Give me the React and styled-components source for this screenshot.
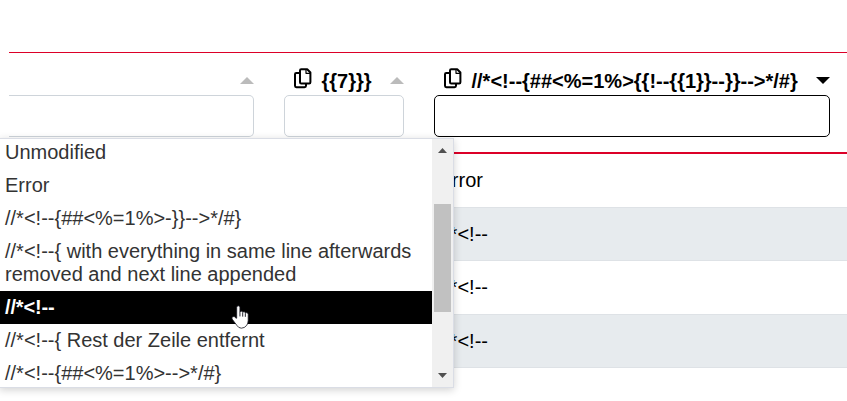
import React from "react";
import styled, { createGlobalStyle } from "styled-components";

const GlobalStyle = createGlobalStyle`
  * { box-sizing: border-box; }
  body {
    margin: 0;
    background: #fff;
    font: 20px/23px "Liberation Sans", Arial, sans-serif;
    color: #000;
    overflow: hidden;
  }
`;

const Page = styled.main`
  position: relative;
  width: 847px;
  height: 401px;
  padding: 52px 0 0 9px;
  overflow: hidden;
`;

const HeaderRow = styled.div`
  display: grid;
  grid-template-columns: 260px 150px 428px;
  height: 102px;
  border-top: 1px solid #dc0028;
  border-bottom: 2px solid #dc0028;
`;

const HeaderCell = styled.div`
  display: flex;
  flex-direction: column;
  padding: 10px ${(p) => p.$right || 15}px 0 ${(p) => (p.$first ? 0 : 15)}px;
`;

const HeaderLine = styled.div`
  display: flex;
  height: 32px;
  align-items: center;
  padding-left: 10px;
`;

const Title = styled.span`
  margin: 5px 0 0 9.5px;
  font-weight: 700;
  white-space: nowrap;
`;

const Filter = styled.div`
  height: 42px;
  background: #fff;
  border: 1px solid ${(p) => (p.$active ? "#000" : "#ced4da")};
  border-left-width: ${(p) => (p.$first ? 0 : 1)}px;
  border-radius: ${(p) => (p.$first ? "0 5px 5px 0" : "5px")};
`;

const SortIcon = styled.svg`
  display: block;
  width: 14px;
  height: 7px;
  margin: 3px 0 0 auto;
  fill: ${(p) => (p.$active ? "#000" : "#bbb")};
`;

const Row = styled.div`
  display: flex;
  align-items: center;
  height: ${(p) => p.$height}px;
  padding-left: 429.5px;
  background: ${(p) => (p.$striped ? "#e7ebee" : "#fff")};
  border-bottom: 1px solid #dee2e6;
`;

const Menu = styled.div`
  position: absolute;
  top: 138px;
  left: -1px;
  display: flex;
  width: 455px;
  height: 250px;
  background: #fff;
  border: 1px solid #dadde5;
  box-shadow: 0 2px 8px rgba(0, 0, 0, 0.18);
`;

const Options = styled.div`
  flex: 1;
  height: 248px;
  overflow: hidden;
`;

const OptionList = styled.div`
  margin-top: -3px;
`;

const Option = styled.div`
  padding: 5px 15px 5px 5px;
  color: ${(p) => (p.$active ? "#fff" : "#333")};
  background: ${(p) => (p.$active ? "#000" : "transparent")};
  font-weight: ${(p) => (p.$active ? 700 : 400)};
  letter-spacing: ${(p) => (p.$active ? "-0.15px" : "normal")};
`;

const Scrollbar = styled.div`
  display: flex;
  flex-direction: column;
  width: 21px;
  background: #f0f0f0;
`;

const Arrow = styled.svg`
  display: block;
  width: 9px;
  height: 5px;
  margin: ${(p) => (p.$down ? "auto 0 9px 6px" : "9px 0 51px 6px")};
  fill: #505050;
`;

const Thumb = styled.div`
  width: 17px;
  height: 108px;
  margin-left: 2px;
  background: #c1c1c1;
`;

const Pointer = styled.svg`
  position: absolute;
  left: 231px;
  top: 305px;
  width: 18.5px;
  height: 24.5px;
`;

const CopySvg = styled.svg`
  display: block;
  flex: none;
  width: 18px;
  height: 21px;
  margin-top: -1px;
`;

const CopyIcon = () => (
  <CopySvg viewBox="0 0 18 21" fill="none" stroke="#000" strokeWidth="2" strokeLinejoin="round">
    <path d="M5.5 5H2.3Q1 5 1 6.3V17.8Q1 19.2 2.3 19.2H10.5Q12 19.2 12 17.8V16" />
    <path d="M7.2 1.2H13.2L16.4 4.5V14.3Q16.4 15.5 15.2 15.5H7.2Q6 15.5 6 14.3V2.4Q6 1.2 7.2 1.2Z" />
    <path d="M12 1.2V5.3H16.4" strokeWidth="1.2" />
  </CopySvg>
);

const Sort = ({ active }) => (
  <SortIcon $active={active} viewBox="0 0 14 7">
    <path d={active ? "M0 0H14L7 7Z" : "M0 7H14L7 0Z"} />
  </SortIcon>
);

const options = [
  "Unmodified",
  "Error",
  "//*<!--{##<%=1%>-}}-->*/#}",
  "//*<!--{ with everything in same line afterwards removed and next line appended",
  "//*<!--",
  "//*<!--{ Rest der Zeile entfernt",
  "//*<!--{##<%=1%>-->*/#}",
];

const rows = [
  { text: "Error", height: 54 },
  { text: "//*<!--", height: 53, striped: true },
  { text: "//*<!--", height: 54 },
  { text: "//*<!--", height: 53, striped: true },
];

export default function App() {
  return (
    <>
      <GlobalStyle />
      <Page>
        <HeaderRow>
          <HeaderCell $first>
            <HeaderLine><Sort /></HeaderLine>
            <Filter $first />
          </HeaderCell>
          <HeaderCell>
            <HeaderLine><CopyIcon /><Title>{"{{7}}}"}</Title><Sort /></HeaderLine>
            <Filter />
          </HeaderCell>
          <HeaderCell $right={17}>
            <HeaderLine>
              <CopyIcon /><Title>{"//*<!--{##<%=1%>{{!--{{1}}--}}-->*/#}"}</Title><Sort active />
            </HeaderLine>
            <Filter $active />
          </HeaderCell>
        </HeaderRow>
        {rows.map((row, i) => (
          <Row key={i} $height={row.height} $striped={row.striped}>{row.text}</Row>
        ))}
        <Menu>
          <Options>
            <OptionList>
              {options.map((text, i) => (
                <Option key={text} $active={i === 4}>{text}</Option>
              ))}
            </OptionList>
          </Options>
          <Scrollbar>
            <Arrow viewBox="0 0 9 5"><path d="M0 5H9L4.5 0Z" /></Arrow>
            <Thumb />
            <Arrow $down viewBox="0 0 9 5"><path d="M0 0H9L4.5 5Z" /></Arrow>
          </Scrollbar>
        </Menu>
        <Pointer viewBox="0 0 18 24">
          <path
            d="M5.5 13V2.5Q5.5 .8 7.1 .8T8.7 2.5V7Q9 6 10.2 6T11.5 7.2Q12 6.4 13 6.6T14 8Q14.5 7.2 15.6 7.6T16.8 9V15Q16.8 18 15.3 20Q13.2 22.7 10 22.7Q7.2 22.5 5.7 20L1 13.8Q.3 12 1.8 11.4T4.3 12.4Z"
            fill="#fff" stroke="#15151f" strokeWidth=".8"
          />
          <path d="M8.7 7V11.2M11.4 7.3V11.4M14 8.2V11.6" stroke="#15151f" strokeWidth=".9" />
        </Pointer>
      </Page>
    </>
  );
}
